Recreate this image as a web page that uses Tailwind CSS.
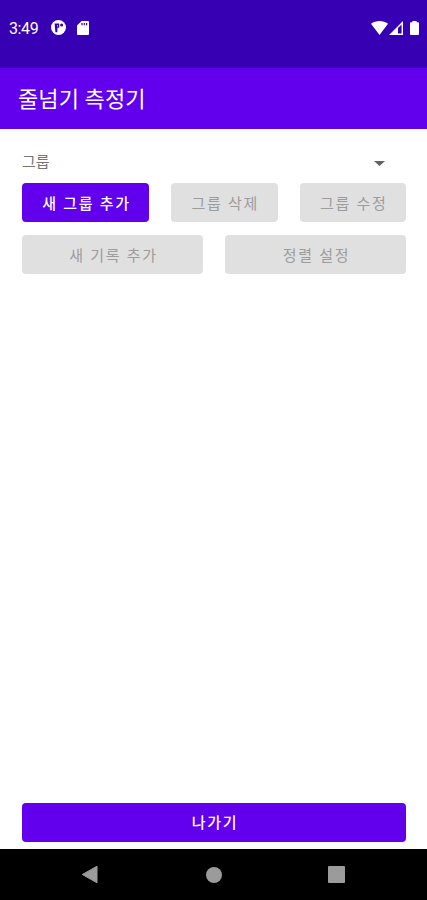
<!DOCTYPE html>
<html lang="ko">
<head>
    <meta charset="UTF-8">
    <meta name="viewport" content="width=device-width, initial-scale=1.0">
    <title>줄넘기 측정기</title>
    <script src="https://cdn.jsdelivr.net/npm/@tailwindcss/browser@4"></script>
</head>
<body class="flex h-screen flex-col overflow-hidden bg-white font-[Roboto,'Noto_Sans_CJK_KR',sans-serif]">

    <!-- status bar -->
    <div class="flex h-[68px] shrink-0 items-start justify-between bg-[#3700b3] pt-[18px] pr-[8px] pl-[9px] text-white">
        <div class="flex h-[19px] items-center">
            <span class="w-[42px] pt-px text-base leading-[19px] tracking-[-0.4px]">3:49</span>
            <svg class="h-[15px] w-[15px]" viewBox="0 0 15 15">
                <circle cx="7.5" cy="7.5" r="7.5" fill="#fff"/>
                <path d="M3.6 3.4h4.6v4.4H6.4v4.4H4.4z" fill="#3700b3"/>
                <path d="M6 5.2h.8v1.4H6z" fill="#fff"/>
                <circle cx="10.6" cy="5" r="1.5" fill="#3700b3"/>
            </svg>
            <svg class="ml-[11px] h-[14px] w-[12px]" viewBox="0 0 12 14">
                <path d="M4.6 0H11a1 1 0 0 1 1 1v12a1 1 0 0 1-1 1H1a1 1 0 0 1-1-1V4.6z" fill="#fff"/>
                <path d="M5 2v2.2M7.3 2v2.2M9.6 2v2.2" stroke="#3700b3" stroke-width="1.2"/>
            </svg>
        </div>
        <div class="flex h-[19px] items-center">
            <svg class="h-[14px] w-[17px]" viewBox="0 0 17 14">
                <path d="M0 2.8C4.8-.9 12.2-.9 17 2.8L8.5 14z" fill="#fff"/>
            </svg>
            <svg class="ml-px h-[14px] w-[14px]" viewBox="0 0 14 14">
                <path fill-rule="evenodd" d="M14 0v14H0zM12.6 3.6L9 7v5.6h3.6z" fill="#fff"/>
            </svg>
            <svg class="ml-[7px] h-[14px] w-[9px]" viewBox="0 0 9 14">
                <path d="M2.4 0h4.2v1.3H8a1 1 0 0 1 1 1V13a1 1 0 0 1-1 1H1a1 1 0 0 1-1-1V2.3a1 1 0 0 1 1-1h1.4z" fill="#fff"/>
            </svg>
        </div>
    </div>

    <!-- app bar -->
    <header class="flex h-[61px] shrink-0 items-center bg-[#6200ee] pt-[2px] pl-[18px]">
        <h1 class="text-[22px] leading-[30px] tracking-[0.1px] text-white">줄넘기 측정기</h1>
    </header>

    <main class="flex grow flex-col pt-[21px] pr-[21px] pb-[7px] pl-[22px]">
        <div class="flex h-[24px] items-center justify-between pr-[21px] text-[15px] leading-[24px] text-[#757575]">
            <span>그룹</span>
            <svg class="mt-[3px] h-[5px] w-[11px]" viewBox="0 0 11 5">
                <path d="M0 0h11L5.5 5z" fill="#626262"/>
            </svg>
        </div>

        <div class="mt-[9px] flex gap-[22px] text-[15px] leading-5 font-medium tracking-[1.7px]">
            <button class="h-[39px] w-[127px] rounded bg-[#6200ee] pt-[2px] pl-[2px] text-white">새 그룹 추가</button>
            <button class="h-[39px] flex-1 rounded bg-[#e0e0e0] pt-[2px] pl-[2px] font-normal text-[#9c9c9c]">그룹 삭제</button>
            <button class="h-[39px] flex-1 rounded bg-[#e0e0e0] pt-[2px] pl-[2px] font-normal text-[#9c9c9c]">그룹 수정</button>
        </div>

        <div class="mt-[13px] flex gap-[22px] text-[15px] leading-5 tracking-[1.7px] text-[#9c9c9c]">
            <button class="h-[39px] flex-1 rounded bg-[#e0e0e0] pt-[2px] pl-[2px]">새 기록 추가</button>
            <button class="h-[39px] flex-1 rounded bg-[#e0e0e0] pt-[2px] pl-[2px]">정렬 설정</button>
        </div>

        <button class="mt-auto h-[39px] rounded bg-[#6200ee] pt-px pl-[2px] text-[15px] leading-5 font-medium tracking-[1.7px] text-white">나가기</button>
    </main>

    <!-- navigation bar -->
    <nav class="flex h-[51px] shrink-0 items-center justify-between bg-black pr-[82px] pl-[81px]">
        <svg class="h-[19px] w-[17px]" viewBox="0 0 17 19">
            <path d="M16 1.2v16.6L1.3 9.5z" fill="#9b9b9b" stroke="#9b9b9b" stroke-linejoin="round"/>
        </svg>
        <span class="ml-[2px] h-4 w-4 rounded-full bg-[#9b9b9b]"></span>
        <span class="h-[17px] w-[17px] rounded-[1px] bg-[#9b9b9b]"></span>
    </nav>

</body>
</html>
